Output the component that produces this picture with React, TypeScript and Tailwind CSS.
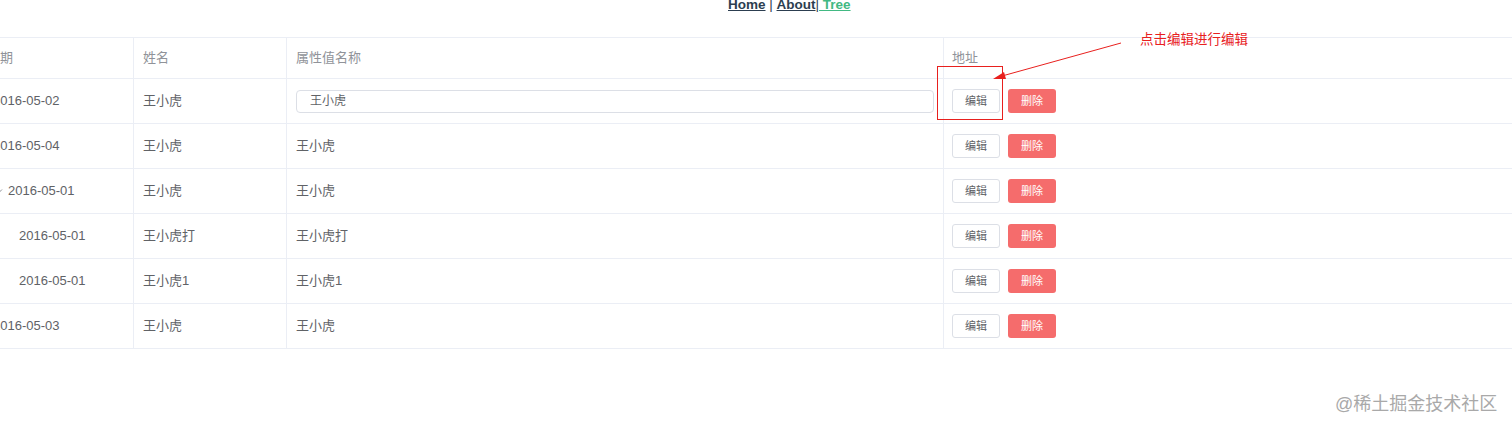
import React from "react";

const rows = [
  { date: "2016-05-02", name: "王小虎", attr: "王小虎", kind: "plain", editing: true },
  { date: "2016-05-04", name: "王小虎", attr: "王小虎", kind: "plain" },
  { date: "2016-05-01", name: "王小虎", attr: "王小虎", kind: "parent" },
  { date: "2016-05-01", name: "王小虎打", attr: "王小虎打", kind: "child" },
  { date: "2016-05-01", name: "王小虎1", attr: "王小虎1", kind: "child" },
  { date: "2016-05-03", name: "王小虎", attr: "王小虎", kind: "plain" },
];

const font = { fontFamily: '"Liberation Sans", "Noto Sans CJK SC", sans-serif' };

function Actions() {
  return (
    <div className="flex items-center gap-[8px]">
      <button className="w-[48px] h-[24px] rounded-[3px] border border-[#dcdfe6] bg-white text-[11px] text-[#606266] leading-none">
        编辑
      </button>
      <button className="w-[48px] h-[24px] rounded-[3px] bg-[#f56c6c] text-[11px] text-white leading-none">
        删除
      </button>
    </div>
  );
}

export default function App() {
  return (
    <div className="relative w-[1512px] h-[429px] overflow-hidden bg-white" style={font}>
      {/* nav */}
      <div className="h-[40px] pl-[728px] -mt-[3px] text-[13.5px] font-bold text-[#2c3e50] leading-[16px]">
        <span className="underline">Home</span>
        <span className="font-normal"> | </span>
        <span className="underline">About</span>
        <span className="font-normal">|</span>
        <span className="underline text-[#42b983]">&nbsp;Tree</span>
      </div>

      {/* table */}
      <div className="-ml-[20px] w-[1560px] border-t border-[#ebeef5] text-[13px]">
        <div className="grid grid-cols-[154px_153px_657px_1fr] h-[41px] border-b border-[#ebeef5] text-[#909399]">
          <div className="flex items-center pl-[7px] border-r border-[#ebeef5]">日期</div>
          <div className="flex items-center pl-[9px] border-r border-[#ebeef5]">姓名</div>
          <div className="flex items-center pl-[9px] border-r border-[#ebeef5]">属性值名称</div>
          <div className="flex items-center pl-[8px]">地址</div>
        </div>
        {rows.map((r, i) => (
          <div
            key={i}
            className="grid grid-cols-[154px_153px_657px_1fr] h-[45px] border-b border-[#ebeef5] text-[#606266]"
          >
            <div
              className={`flex items-center border-r border-[#ebeef5] ${
                r.kind === "parent" ? "pl-[15px]" : r.kind === "child" ? "pl-[39px]" : "pl-[13px]"
              }`}
            >
              {r.kind === "parent" && (
                <svg width="8" height="8" viewBox="0 0 8 8" className="mr-[5px]">
                  <path d="M1 2.5 L4 5.5 L7 2.5" fill="none" stroke="#909399" strokeWidth="1" />
                </svg>
              )}
              {r.date}
            </div>
            <div className="flex items-center pl-[9px] border-r border-[#ebeef5]">{r.name}</div>
            <div className="flex items-center pl-[9px] pr-[9px] border-r border-[#ebeef5]">
              {r.editing ? (
                <div className="w-[638px] h-[23px] rounded-[4px] border border-[#dcdfe6] flex items-center pl-[13px] text-[12px]">
                  {r.attr}
                </div>
              ) : (
                r.attr
              )}
            </div>
            <div className="flex items-center pl-[8px]">
              <Actions />
            </div>
          </div>
        ))}
      </div>

      {/* annotation */}
      <div className="absolute left-[937px] top-[66px] w-[66px] h-[54px] border border-[#e8201e]" />
      <svg className="absolute left-0 top-0" width="1512" height="429">
        <line x1="1121" y1="43" x2="1002" y2="76" stroke="#e8201e" strokeWidth="1" />
        <polygon points="993,79 1004,72 1006,79" fill="#e8201e" />
      </svg>
      <div className="absolute left-[1140px] top-[31px] text-[13.5px] text-[#e8201e] leading-[18px]">
        点击编辑进行编辑
      </div>

      {/* watermark */}
      <div className="absolute left-[1335px] top-[392px] text-[18px] leading-[24px] text-[#a9a9a9]">
        @稀土掘金技术社区
      </div>
    </div>
  );
}
